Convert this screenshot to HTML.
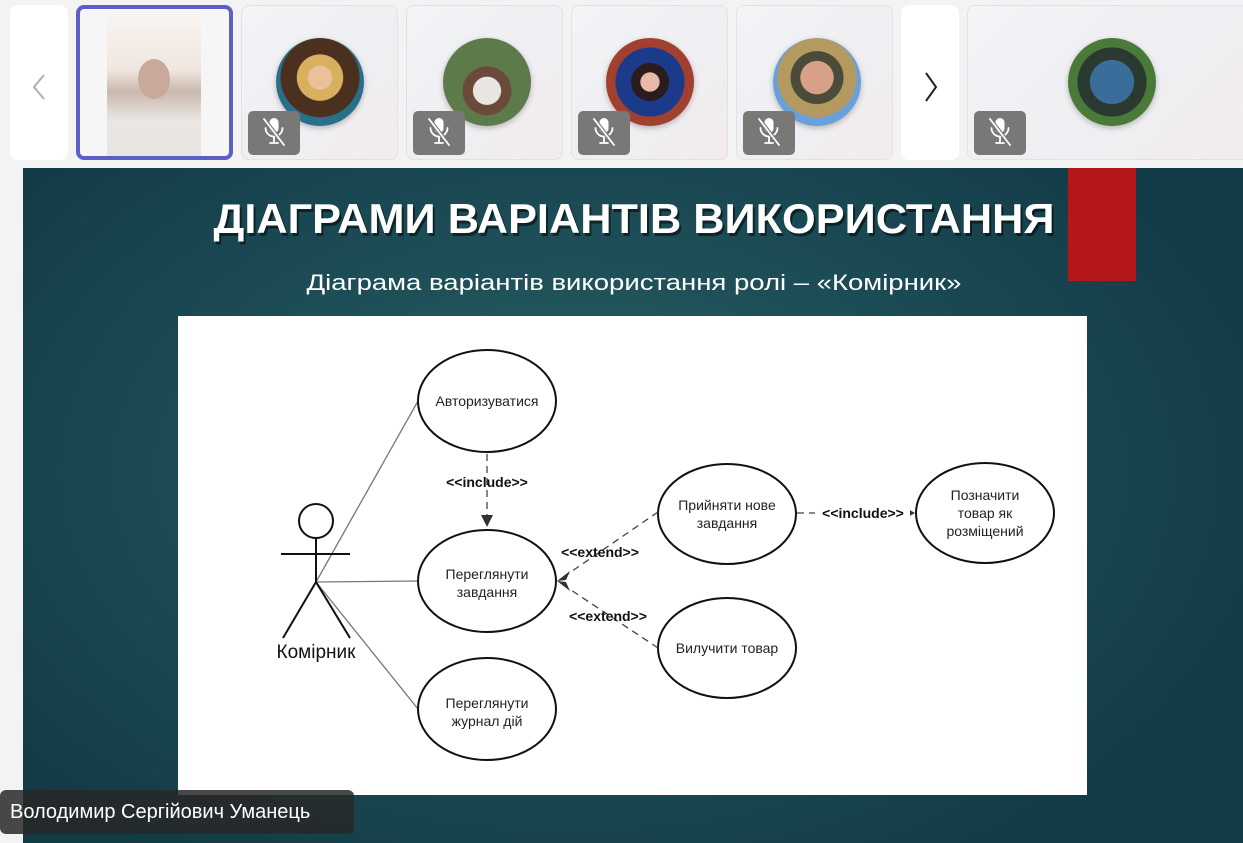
<!DOCTYPE html>
<html><head><meta charset="utf-8"><style>
html,body{margin:0;padding:0;width:1243px;height:843px;overflow:hidden;background:#f3f3f3;font-family:"Liberation Sans","DejaVu Sans",sans-serif}
.t{position:absolute;top:5px;width:157px;height:155px;border-radius:8px;border:1px solid #e2e2e2;box-sizing:border-box;background:linear-gradient(135deg,#f2f4f6,#efeef2 60%,#f3eceb)}
.btn{position:absolute;top:5px;height:155px;width:58px;background:#fff;border-radius:8px}
.av{position:absolute;width:88px;height:88px;border-radius:50%;top:32px;box-shadow:0 2px 6px rgba(0,0,0,.25)}
.mic{position:absolute;left:6px;top:105px;width:52px;height:44px;border-radius:5px;background:#7a7876}
.slide{position:absolute;left:23px;top:168px;width:1220px;height:675px;background:radial-gradient(ellipse 60% 70% at 45% 45%,#2d6468 0%,#1e4f58 45%,#123a47 100%)}
.name{position:absolute;left:0;top:790px;width:354px;height:44px;background:rgba(40,40,40,.85);border-radius:6px;color:#fff;font-size:20px;line-height:44px;padding-left:10px;box-sizing:border-box}
</style></head><body>
<div class="btn" style="left:10px"><svg width="58" height="155"><path d="M34 70 L24 82 L34 94" fill="none" stroke="#b0b0b0" stroke-width="2"/></svg></div>
<div class="t" style="left:76px;border:4px solid #5b5fc7;background:#f6f6f6"><div style="position:absolute;left:27px;top:4px;width:94px;height:143px;background:linear-gradient(180deg,#f9f5f1 0%,#efe6df 40%,#c9b8ac 55%,#eae6e3 75%,#e8e4e1)"></div><div style="position:absolute;left:58px;top:50px;width:32px;height:40px;border-radius:50%;background:#c9a99a"></div></div>
<div class="t" style="left:241px"><div class="av" style="left:34px;background:radial-gradient(circle at 50% 45%,#e9c29c 0 18%,#d9b060 19% 35%,#4b3020 36% 60%,#2a6f8a 61%)"></div><div class="mic"></div></div>
<div class="t" style="left:406px"><div class="av" style="left:36px;background:radial-gradient(circle at 50% 60%,#e8e6e2 0 20%,#6b4a3a 21% 35%,#5c7a4a 36%)"></div><div class="mic"></div></div>
<div class="t" style="left:571px"><div class="av" style="left:34px;background:radial-gradient(circle at 50% 50%,#e8b8a8 0 15%,#2a1c1c 16% 30%,#1b3a8a 31% 55%,#a24030 56%)"></div><div class="mic"></div></div>
<div class="t" style="left:736px"><div class="av" style="left:36px;background:radial-gradient(circle at 50% 45%,#d9a088 0 25%,#4b4b3a 26% 40%,#b59a60 41% 60%,#6aa0d8 61%)"></div><div class="mic"></div></div>
<div class="btn" style="left:901px"><svg width="58" height="155"><path d="M25 68 L35 82 L25 96" fill="none" stroke="#222" stroke-width="2"/></svg></div>
<div class="t" style="left:967px;width:290px"><div class="av" style="left:100px;background:radial-gradient(circle at 50% 50%,#3b6d9a 0 35%,#2a3a30 36% 55%,#4a7a3a 56%)"></div><div class="mic"></div></div>
<svg style="position:absolute;left:0;top:0" width="1243" height="843">
<defs><g id="m" stroke="#fff" stroke-width="1.8" stroke-linecap="round" fill="none"><rect x="21.5" y="8" width="9" height="15" rx="4.5" fill="#fff" stroke="none"/><path d="M17.5 18 a8.5 8.5 0 0 0 17 0 M26 27 v6 M22 33 h8"/><path d="M16 9 L36 35" stroke="#7a7876" stroke-width="4"/><path d="M16 9 L36 35"/></g></defs>
<use href="#m" x="248" y="110"/><use href="#m" x="413" y="110"/><use href="#m" x="578" y="110"/><use href="#m" x="743" y="110"/><use href="#m" x="974" y="110"/>
</svg>
<div class="slide"></div>
<svg style="position:absolute;left:0;top:0" width="1243" height="843" font-family="Liberation Sans, DejaVu Sans, sans-serif">
<rect x="1068" y="168" width="68" height="113" fill="#b3171a"/>
<text x="634" y="233" text-anchor="middle" font-size="42" font-weight="bold" fill="#000" opacity=".5" textLength="841" lengthAdjust="spacingAndGlyphs" transform="translate(2,3)">ДІАГРАМИ ВАРІАНТІВ ВИКОРИСТАННЯ</text>
<text x="634" y="233" text-anchor="middle" font-size="42" font-weight="bold" fill="#fff" textLength="841" lengthAdjust="spacingAndGlyphs">ДІАГРАМИ ВАРІАНТІВ ВИКОРИСТАННЯ</text>
<text x="634" y="290" text-anchor="middle" font-size="22" fill="#fff" textLength="655" lengthAdjust="spacingAndGlyphs">Діаграма варіантів використання ролі – «Комірник»</text>
<rect x="178" y="316" width="909" height="479" fill="#fff"/>
<g fill="none" stroke="#777" stroke-width="1.3"><path d="M316 582 L418 401 M316 582 L418 581 M316 582 L418 709"/></g>
<g fill="none" stroke="#111" stroke-width="2">
<circle cx="316" cy="521" r="17"/><path d="M316 538 V582 M281 554 H350 M316 582 L283 638 M316 582 L350 638"/>
<ellipse cx="487" cy="401" rx="69" ry="51"/><ellipse cx="487" cy="581" rx="69" ry="51"/><ellipse cx="487" cy="709" rx="69" ry="51"/>
<ellipse cx="727" cy="514" rx="69" ry="50"/><ellipse cx="727" cy="648" rx="69" ry="50"/><ellipse cx="985" cy="513" rx="69" ry="50"/>
</g>
<g fill="none" stroke="#444" stroke-width="1.3" stroke-dasharray="7 5"><path d="M487 454 V520 M658 512 L562 578 M658 648 L562 584 M797 513 H910"/></g>
<g fill="#333"><path d="M481 515 L493 515 L487 527z"/><path d="M557 581 L570 571 L566 580z M557 581 L570 591 L566 582z"/><path d="M915 513 L906 508 L906 518z"/></g>
<rect x="815" y="505" width="95" height="16" fill="#fff"/>
<g font-size="14" font-weight="bold" fill="#111" text-anchor="middle"><text x="487" y="487">&lt;&lt;include&gt;&gt;</text><text x="600" y="557">&lt;&lt;extend&gt;&gt;</text><text x="608" y="621">&lt;&lt;extend&gt;&gt;</text><text x="863" y="518">&lt;&lt;include&gt;&gt;</text></g>
<g font-size="14" fill="#222" text-anchor="middle">
<text x="487" y="406">Авторизуватися</text>
<text x="487" y="579">Переглянути</text><text x="487" y="597">завдання</text>
<text x="487" y="708">Переглянути</text><text x="487" y="726">журнал дій</text>
<text x="727" y="510">Прийняти нове</text><text x="727" y="528">завдання</text>
<text x="727" y="653">Вилучити товар</text>
<text x="985" y="500">Позначити</text><text x="985" y="518">товар як</text><text x="985" y="536">розміщений</text>
</g>
<text x="316" y="658" text-anchor="middle" font-size="19" fill="#111">Комірник</text>
</svg>
<div class="name">Володимир Сергійович Уманець</div>
</body></html>
